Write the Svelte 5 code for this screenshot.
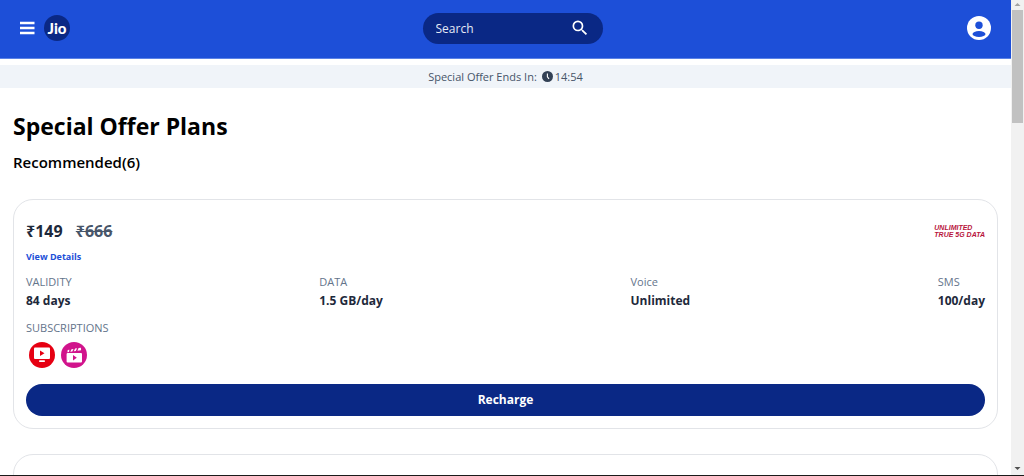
<script>
    let search = $state('');
    let seconds_left = $state(14 * 60 + 54);

    const plans = [
        { id: 1, price: 149, old_price: 666, validity: '84 days', data: '1.5 GB/day', voice: 'Unlimited', sms: '100/day' },
        { id: 2, price: 199, old_price: 799, validity: '84 days', data: '2 GB/day', voice: 'Unlimited', sms: '100/day' }
    ];

    function get_details(plan){
        return [
            { label: 'VALIDITY', value: plan.validity },
            { label: 'DATA', value: plan.data },
            { label: 'Voice', value: plan.voice },
            { label: 'SMS', value: plan.sms }
        ];
    }

    function format_time(total){
        const minutes = Math.floor(total / 60);
        const seconds = String(total % 60).padStart(2, '0');
        return `${minutes}:${seconds}`;
    }
</script>

<div class="window">
    <div class="page">
        <header>
            <div class="brand">
                <button class="icon_button" aria-label="Menu">
                    <svg width="16" height="14" viewBox="0 0 16 14">
                        <path d="M0 2h14.5M0 7h14.5M0 12h14.5" stroke="#fff" stroke-width="2.3" />
                    </svg>
                </button>
                <a class="logo" href="#home">Jio</a>
            </div>
            <form class="search" onsubmit={(e) => e.preventDefault()}>
                <input type="text" placeholder="Search" aria-label="Search" bind:value={search}>
                <button class="icon_button" aria-label="Submit search">
                    <svg width="20" height="20" viewBox="0 0 24 24" fill="#fff">
                        <path d="M15.5 14h-.79l-.28-.27A6.47 6.47 0 0 0 16 9.5 6.5 6.5 0 1 0 9.5 16c1.61 0 3.09-.59 4.23-1.57l.27.28v.79l5 4.99L20.49 19l-4.99-5zm-6 0C7.01 14 5 11.99 5 9.5S7.01 5 9.5 5 14 7.01 14 9.5 11.99 14 9.5 14z" />
                    </svg>
                </button>
            </form>
            <button class="icon_button account" aria-label="Account">
                <svg width="24" height="24" viewBox="0 0 24 24">
                    <circle cx="12" cy="12" r="12" fill="#fff" />
                    <circle cx="12" cy="9.3" r="3.7" fill="#1d4fd8" />
                    <ellipse cx="12" cy="18" rx="6.5" ry="3" fill="#1d4fd8" />
                </svg>
            </button>
        </header>

        <div class="offer">
            <span>Special Offer Ends In:</span>
            <span class="timer">
                <svg width="11" height="11" viewBox="0 0 11 11">
                    <circle cx="5.5" cy="5.5" r="5.5" fill="#334155" />
                    <path d="M5.4 2.4v3.4l1.6 2" fill="none" stroke="#fff" stroke-width="1.1" />
                </svg>
                {format_time(seconds_left)}
            </span>
        </div>

        <main>
            <h1>Special Offer Plans</h1>
            <h2>Recommended(6)</h2>

            {#each plans as plan (plan.id)}
                <article class="card">
                    <div class="card_head">
                        <p class="price">₹{plan.price} <s>₹{plan.old_price}</s></p>
                        <p class="tag">UNLIMITED<br>TRUE 5G DATA</p>
                    </div>
                    <a class="view_details" href="#plan_{plan.id}">View Details</a>
                    <dl class="details">
                        {#each get_details(plan) as item}
                            <div>
                                <dt>{item.label}</dt>
                                <dd>{item.value}</dd>
                            </div>
                        {/each}
                    </dl>
                    <p class="label">SUBSCRIPTIONS</p>
                    <div class="subscriptions">
                        <svg width="26" height="26" viewBox="0 0 26 26">
                            <circle cx="13" cy="13" r="13" fill="#e60012" />
                            <rect x="5" y="5.5" width="16" height="11.5" rx="1" fill="#fff" />
                            <path d="M11 8.5l4.5 2.8-4.5 2.8z" fill="#e60012" />
                            <rect x="10" y="18.3" width="6" height="1.8" rx=".8" fill="#fff" />
                        </svg>
                        <svg width="26" height="26" viewBox="0 0 26 26">
                            <circle cx="13" cy="13" r="13" fill="#d1148c" />
                            <rect x="5.6" y="11" width="15.4" height="9.6" rx="1" fill="#fff" />
                            <path d="M6.4 10.2l.3-2.2 1.7-.3-.4 2.2zM9.3 9.7l1.2-2.5 2-.3-1.2 2.5zM12.8 9.2l1.3-2.6 2-.3-1.3 2.6zM16.4 8.7l1.2-2.6 2.3-.4.2 2.6z" fill="#fff" />
                            <path d="M12 13l3.8 2.7-3.8 2.7z" fill="#d1148c" />
                        </svg>
                    </div>
                    <button class="recharge">Recharge</button>
                </article>
            {/each}
        </main>
    </div>

    <div class="scrollbar" aria-hidden="true">
        <svg width="13" height="10" viewBox="0 0 13 10"><path d="M3.5 6l3-3 3 3z" fill="#a3a3a3" /></svg>
        <div class="thumb"></div>
        <svg width="13" height="13" viewBox="0 0 13 13"><path d="M3.5 5l3 3 3-3z" fill="#505050" /></svg>
    </div>
</div>

<style>
    :global(body){
        background-color: #fff;
    }

    .window{
        display: flex;
        box-sizing: border-box;
        height: 100vh;
        overflow: hidden;
        border-bottom: 1px solid #1a1a1a;
        font-family: "Segoe UI", "Open Sans", "Noto Sans", sans-serif;
        color: #1e293b;
    }

    .page{
        flex: 1;
        overflow-y: auto;
        scrollbar-width: none;
    }

    h1, h2, p, dl, dd{
        margin: 0;
    }

    a{
        text-decoration: none;
    }

    button{
        border: none;
        font-family: inherit;
        cursor: pointer;
    }

    header{
        display: flex;
        justify-content: space-between;
        align-items: center;
        height: 56px;
        padding: 0 8px 2px 20px;
        border-bottom: 1px solid #5b82e6;
        background-color: #1d4fd8;
    }

    .brand{
        display: flex;
        align-items: center;
        gap: 8px;
    }

    .icon_button{
        display: flex;
        padding: 0;
        background: none;
    }

    .logo{
        width: 26px;
        border-radius: 50%;
        background-color: #0a2885;
        color: #fff;
        font-family: Lato, sans-serif;
        font-size: 15px;
        font-weight: 900;
        line-height: 26px;
        text-align: center;
    }

    .search{
        display: flex;
        align-items: center;
        box-sizing: border-box;
        width: 180px;
        height: 31px;
        padding: 0 13px;
        border-radius: 16px;
        background-color: #0a2885;
    }

    .search input{
        flex: 1;
        min-width: 0;
        padding: 0;
        border: none;
        outline: none;
        background: none;
        color: #fff;
        font-family: inherit;
        font-size: 12px;
    }

    .search input::placeholder{
        color: #e5e9f5;
    }

    .account{
        padding: 0 12px;
    }

    .offer{
        display: flex;
        justify-content: center;
        gap: 5px;
        margin-top: 6px;
        background-color: #f0f4f9;
        color: #475569;
        font-size: 11px;
        line-height: 23px;
    }

    .timer{
        display: flex;
        align-items: center;
        gap: 2px;
    }

    main{
        padding: 23px 13px;
    }

    h1{
        color: #000;
        font-size: 23px;
        font-weight: 700;
        line-height: 30px;
    }

    h2{
        margin: 11px 0 27px;
        color: #000;
        font-size: 15px;
        font-weight: 600;
        line-height: 20px;
    }

    .card{
        margin-bottom: 25px;
        padding: 20px 12px 12px;
        border: 1px solid #e2e4e8;
        border-radius: 20px;
    }

    .card_head{
        display: flex;
        justify-content: space-between;
        align-items: center;
        height: 22px;
    }

    .price{
        font-size: 16px;
        font-weight: 700;
    }

    .price s{
        margin-left: 9px;
        color: #475569;
    }

    .tag{
        color: #b8143c;
        font-family: "Liberation Sans", Arial, sans-serif;
        font-size: 7px;
        font-style: italic;
        font-weight: 900;
        line-height: 7px;
    }

    .view_details{
        display: block;
        margin: 7px 0 9px;
        color: #1d4fd8;
        font-size: 9px;
        font-weight: 700;
        line-height: 16px;
    }

    .details{
        display: flex;
        justify-content: space-between;
        margin-bottom: 8px;
    }

    dt, .label{
        color: #64748b;
        font-size: 11px;
        line-height: 16px;
    }

    dd{
        font-size: 12px;
        font-weight: 700;
        line-height: 22px;
    }

    .subscriptions{
        display: flex;
        gap: 6px;
        margin: 6px 3px 16px;
    }

    .recharge{
        width: 100%;
        padding: 0;
        border-radius: 16px;
        background-color: #0a2885;
        color: #fff;
        font-size: 12px;
        font-weight: 700;
        line-height: 32px;
    }

    .scrollbar{
        display: flex;
        flex-direction: column;
        width: 13px;
        background-color: #f1f1f1;
    }

    .thumb{
        height: 113px;
        margin: 0 1px auto;
        background-color: #c1c1c1;
    }
</style>
